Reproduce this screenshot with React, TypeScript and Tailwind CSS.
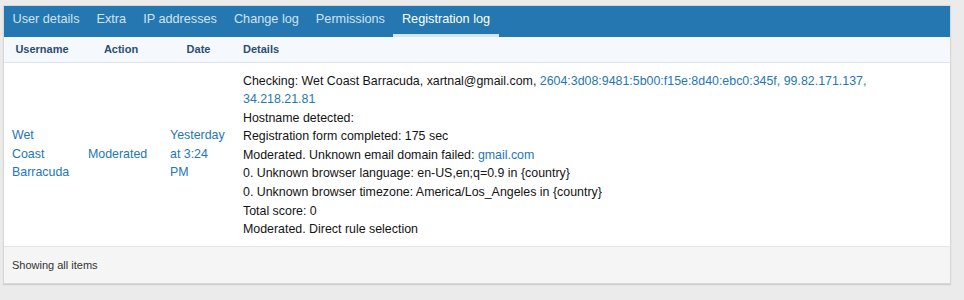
const tabs = ['User details', 'Extra', 'IP addresses', 'Change log', 'Permissions', 'Registration log'];

const link = 'text-[#2577b1]';

export default function App() {
  return (
    <div className="min-h-screen bg-[#ebebeb] pt-[5px] pl-[3px] pr-[13px] font-['Liberation_Sans',sans-serif] text-[#141414]">
      <div className="border border-[#d8d8d8] bg-white shadow-[0_1px_1px_rgba(0,0,0,0.12)]">
        {/* tabs */}
        <div className="flex h-[31px] items-stretch bg-[#2577b1]">
          {tabs.map((t, i) => {
            const active = i === tabs.length - 1;
            return (
              <div
                key={t}
                className={
                  'flex items-center px-[8.5px] text-[12.7px] border-b-[3px] ' +
                  (active ? 'text-white border-[#d2e6f5]' : 'text-[#cfe3f3] border-transparent')
                }
              >
                {t}
              </div>
            );
          })}
        </div>

        {/* table */}
        <table className="w-full table-fixed border-collapse text-[12.4px] leading-[18.6px]">
          <thead>
            <tr className="bg-[#f5f9fd] border-b border-[#dce3ea] text-[11px] font-bold text-[#2b4e6f]">
              <th className="h-[25px] w-[76px] px-[8px] text-center">Username</th>
              <th className="w-[82px] px-[8px] text-center">Action</th>
              <th className="w-[73px] px-[8px] text-center">Date</th>
              <th className="px-[8px] text-left">Details</th>
            </tr>
          </thead>
          <tbody>
            <tr>
              <td className={`${link} px-[8px] py-[8px] align-middle`}>
                Wet
                <br />
                Coast
                <br />
                Barracuda
              </td>
              <td className={`${link} px-[8px] py-[8px] align-middle`}>Moderated</td>
              <td className={`${link} px-[8px] py-[8px] align-middle`}>Yesterday at 3:24 PM</td>
              <td className="px-[8px] pt-[9px] pb-[7px] align-middle">
                <div>
                  Checking: Wet Coast Barracuda, xartnal@gmail.com,{' '}
                  <span className={link}>2604:3d08:9481:5b00:f15e:8d40:ebc0:345f,</span>{' '}
                  <span className={link}>99.82.171.137,</span> <span className={link}>34.218.21.81</span>
                </div>
                <div>Hostname detected:</div>
                <div>Registration form completed: 175 sec</div>
                <div>
                  Moderated. Unknown email domain failed: <span className={link}>gmail.com</span>
                </div>
                <div>0. Unknown browser language: en-US,en;q=0.9 in {'{country}'}</div>
                <div>0. Unknown browser timezone: America/Los_Angeles in {'{country}'}</div>
                <div>Total score: 0</div>
                <div>Moderated. Direct rule selection</div>
              </td>
            </tr>
          </tbody>
        </table>

        {/* footer */}
        <div className="flex h-[37px] items-center border-t border-[#e5e5e5] bg-[#f5f5f5] px-[8px] text-[11px] text-[#333]">
          Showing all items
        </div>
      </div>
    </div>
  );
}
